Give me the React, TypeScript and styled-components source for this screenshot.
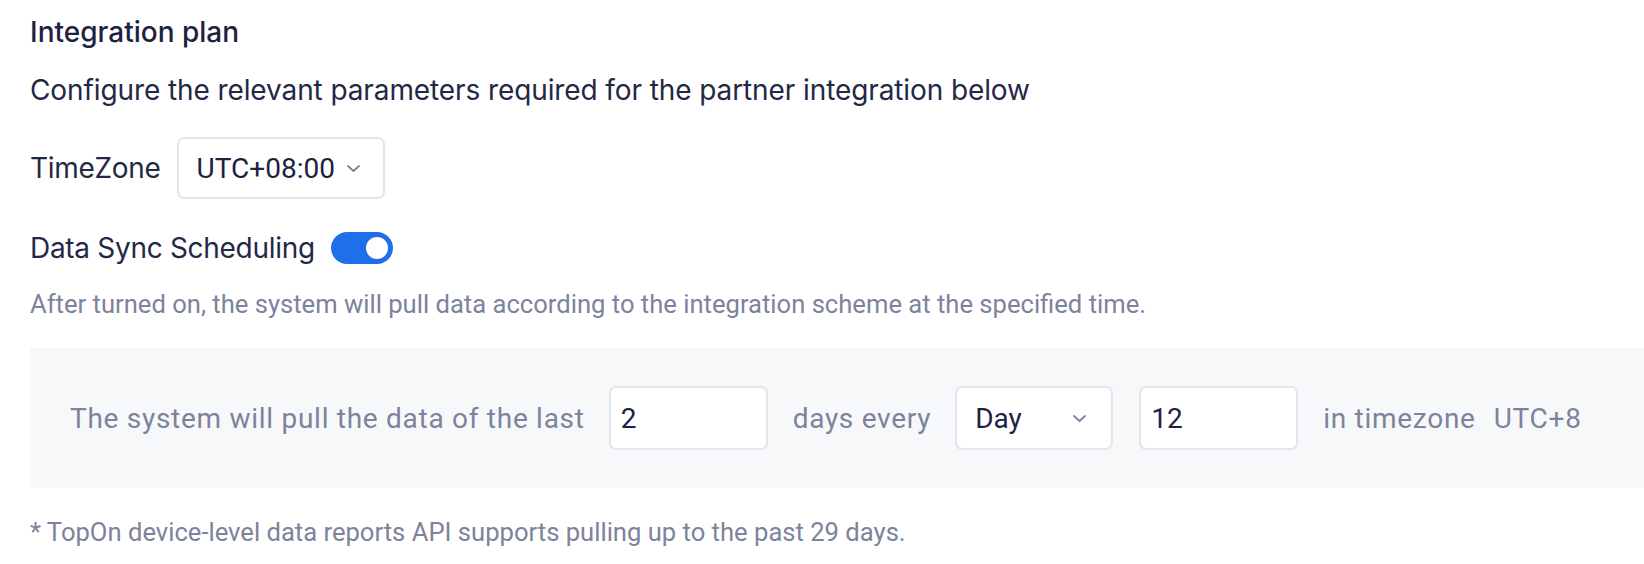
import React, { FC, useState } from 'react';
import styled, { createGlobalStyle } from 'styled-components';

const GlobalStyle = createGlobalStyle`
  html, body {
    margin: 0;
    padding: 0;
    background: #ffffff;
  }
  body {
    font-family: Inter, "Noto Sans", sans-serif;
    -webkit-font-smoothing: antialiased;
  }
`;

const Page = styled.div`
  padding: 12px 0 0 30px;
  display: flex;
  flex-direction: column;
  color: #1d2242;
`;

const Title = styled.div`
  font-size: 28px;
  font-weight: 500;
  line-height: 40px;
`;

const Lead = styled.div`
  margin-top: 18px;
  font-size: 28px;
  line-height: 40px;
  letter-spacing: -0.1px;
  color: #232845;
`;

const Row = styled.div<{ top: number }>`
  margin-top: ${(p) => p.top}px;
  display: flex;
  align-items: center;
  gap: 16px;
`;

const Label = styled.span`
  font-size: 28px;
  line-height: 40px;
  letter-spacing: -0.3px;
  color: #232845;
`;

const SelectBox = styled.div<{ width: number; padLeft: number }>`
  box-sizing: border-box;
  width: ${(p) => p.width}px;
  height: 62px;
  padding: 0 22px 0 ${(p) => p.padLeft}px;
  display: flex;
  align-items: center;
  justify-content: space-between;
  background: #ffffff;
  border: 2px solid #e3e6ee;
  border-radius: 7px;
  font-family: Roboto, "Liberation Sans", sans-serif;
  font-size: 28px;
  color: #1d2242;
  cursor: pointer;
`;

const Chevron = styled.svg`
  width: 15px;
  height: 9px;
  flex-shrink: 0;
  color: #7b8299;
`;

const Toggle = styled.button<{ on: boolean }>`
  position: relative;
  width: 62px;
  height: 32px;
  padding: 0;
  border: none;
  border-radius: 16px;
  background: ${(p) => (p.on ? '#1f6fea' : '#c9cdd6')};
  cursor: pointer;

  &::after {
    content: '';
    position: absolute;
    top: 5px;
    left: ${(p) => (p.on ? '35px' : '5px')};
    width: 22px;
    height: 22px;
    border-radius: 50%;
    background: #ffffff;
  }
`;

const Hint = styled.div<{ top: number }>`
  margin-top: ${(p) => p.top}px;
  font-family: Roboto, "Liberation Sans", sans-serif;
  font-size: 25.6px;
  line-height: 36px;
  color: #7c839b;
`;

const Panel = styled.div`
  margin-top: 26px;
  box-sizing: border-box;
  height: 140px;
  padding: 0 40px;
  display: flex;
  align-items: center;
  background: #f7f8fa;
`;

const PanelText = styled.span<{ gap: number }>`
  margin-right: ${(p) => p.gap}px;
  font-family: Roboto, "Liberation Sans", sans-serif;
  font-size: 28px;
  letter-spacing: 0.72px;
  color: #7c839b;
  white-space: nowrap;
`;

const NumberInput = styled.input`
  box-sizing: border-box;
  width: 159px;
  height: 64px;
  margin-right: 25px;
  padding: 0 10px;
  background: #ffffff;
  border: 2px solid #e3e6ee;
  border-radius: 7px;
  font-family: Roboto, "Liberation Sans", sans-serif;
  font-size: 28px;
  color: #1d2242;
  outline: none;
`;

const PanelSelect = styled(SelectBox)`
  height: 64px;
  margin-right: 26px;
  padding-right: 24px;
`;

const ChevronDown: FC = () => (
  <Chevron viewBox="0 0 15 9" fill="none">
    <path d="M2 2l5.5 5 5.5-5" stroke="currentColor" strokeWidth="1.8" strokeLinecap="round" strokeLinejoin="round" />
  </Chevron>
);

export default function App() {
  const [syncOn, setSyncOn] = useState(true);
  const [lastDays, setLastDays] = useState('2');
  const [hour, setHour] = useState('12');

  return (
    <>
      <GlobalStyle />
      <Page>
        <Title>Integration plan</Title>
        <Lead>Configure the relevant parameters required for the partner integration below</Lead>
        <Row top={27}>
          <Label>TimeZone</Label>
          <SelectBox width={208} padLeft={18}>
            <span>UTC+08:00</span>
            <ChevronDown />
          </SelectBox>
        </Row>
        <Row top={29}>
          <Label>Data Sync Scheduling</Label>
          <Toggle on={syncOn} onClick={() => setSyncOn(!syncOn)} aria-label="Data Sync Scheduling" />
        </Row>
        <Hint top={18}>
          After turned on, the system will pull data according to the integration scheme at the specified time.
        </Hint>
        <Panel>
          <PanelText gap={24}>The system will pull the data of the last</PanelText>
          <NumberInput value={lastDays} onChange={(e) => setLastDays(e.target.value)} />
          <PanelText gap={24}>days every</PanelText>
          <PanelSelect width={158} padLeft={18}>
            <span>Day</span>
            <ChevronDown />
          </PanelSelect>
          <NumberInput value={hour} onChange={(e) => setHour(e.target.value)} />
          <PanelText gap={18}>in timezone</PanelText>
          <PanelText gap={0}>UTC+8</PanelText>
        </Panel>
        <Hint top={26}>* TopOn device-level data reports API supports pulling up to the past 29 days.</Hint>
      </Page>
    </>
  );
}
